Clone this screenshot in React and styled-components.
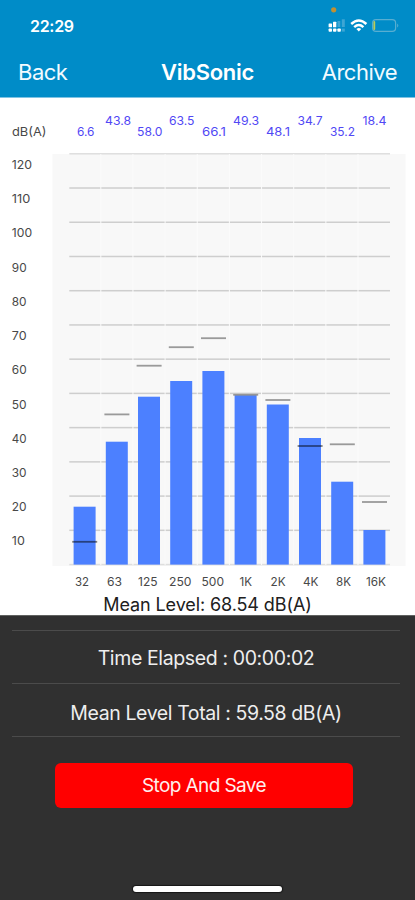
import React from "react";
import styled, { createGlobalStyle } from "styled-components";

const GlobalStyle = createGlobalStyle`
  * { box-sizing: border-box; }
  html, body { margin: 0; padding: 0; background: #303030; }
  body { font-family: Inter, "Liberation Sans", sans-serif; }
`;

const Screen = styled.div`
  display: flex;
  flex-direction: column;
  width: 415px;
  height: 900px;
  overflow: hidden;
  background: #303030;
`;

const Header = styled.header`
  flex: none;
  height: 98px;
  background: #008cc8;
  border-bottom: 1px solid #7fc3e3;
  color: #fff;
`;

const StatusBar = styled.div`
  display: flex;
  justify-content: space-between;
  height: 48px;
  padding: 0 0 0 30px;
`;

const Clock = styled.span`
  padding-top: 16px;
  font-size: 16px;
  line-height: 20px;
  font-weight: 600;
  letter-spacing: -0.3px;
`;

const StatusIcons = styled.svg`
  display: block;
  width: 95px;
  height: 45px;
`;

const NavBar = styled.nav`
  display: grid;
  grid-template-columns: 1fr auto 1fr;
  align-items: center;
  height: 48px;
  padding: 0 18px 0 18px;
`;

const NavButton = styled.button`
  justify-self: ${(p) => p.$side};
  padding: 0;
  border: 0;
  background: none;
  color: #f2fbff;
  font: 400 22px/28px Inter, sans-serif;
  letter-spacing: ${(p) => p.$tracking};
`;

const Title = styled.h1`
  margin: 0;
  font-size: 22px;
  line-height: 28px;
  font-weight: 600;
  letter-spacing: -0.3px;
`;

const ChartPanel = styled.main`
  flex: none;
  height: 518px;
  background: #fff;
  border-bottom: 1px solid #606260;
`;

const Chart = styled.svg`
  display: block;
  width: 415px;
  height: 495px;
`;

const Label = styled.text`
  font-family: Inter, sans-serif;
  font-size: ${(p) => p.$size || 12}px;
  fill: ${(p) => p.$color || "#484848"};
`;

const MeanLevel = styled.p`
  margin: 0;
  padding-top: 1px;
  font-size: 18px;
  line-height: 22px;
  text-align: center;
  color: #202020;
  letter-spacing: -0.1px;
`;

const Footer = styled.section`
  flex: 1;
  display: flex;
  flex-direction: column;
  align-items: center;
  padding: 14px 15px 8px 12px;
`;

const Reading = styled.div`
  display: flex;
  align-items: center;
  justify-content: center;
  width: 100%;
  height: 53px;
  border-top: 1px solid #4b4b4b;
  padding-top: ${(p) => p.$drop};
  color: #eee;
  font-size: 19.5px;
  line-height: 24px;
  letter-spacing: ${(p) => p.$tracking};
  white-space: pre;
`;

const Divider = styled.div`
  width: 100%;
  height: 1px;
  background: #4b4b4b;
`;

const StopButton = styled.button`
  flex: none;
  width: 298px;
  height: 45px;
  margin-top: 26px;
  margin-right: 4px;
  padding: 0;
  border: 0;
  border-radius: 6px;
  background: #ff0000;
  color: #fff0ee;
  font: 400 19px/24px Inter, sans-serif;
  letter-spacing: -0.6px;
`;

const HomeBar = styled.div`
  width: 149px;
  height: 6px;
  margin-top: auto;
  margin-left: 2px;
  border-radius: 3px;
  background: #fff;
  box-shadow: 0 0 1px 1px #171717;
`;

const TOP = 98;
const BASE = 564.6;
const STEP = 34.23;

const bands = [
  { name: "32", nx: 75, nw: 14, peak: "6.6", px: 77, pw: 17.5, top: 506.7, mark: 541.8 },
  { name: "63", nx: 107, nw: 15, peak: "43.8", px: 105, pw: 26, top: 441.7, mark: 414.4 },
  { name: "125", nx: 138, nw: 19.5, peak: "58.0", px: 137, pw: 25.5, top: 396.7, mark: 365.7 },
  { name: "250", nx: 169, nw: 22.5, peak: "63.5", px: 169, pw: 25.5, top: 381, mark: 347.2 },
  { name: "500", nx: 201.5, nw: 22.5, peak: "66.1", px: 202, pw: 24, top: 371, mark: 338.2 },
  { name: "1K", nx: 239.5, nw: 12.5, peak: "49.3", px: 233, pw: 26, top: 395.5, mark: 394.8 },
  { name: "2K", nx: 270.5, nw: 15, peak: "48.1", px: 266, pw: 24, top: 404.5, mark: 400 },
  { name: "4K", nx: 303, nw: 15.5, peak: "34.7", px: 297.5, pw: 25, top: 438, mark: 446 },
  { name: "8K", nx: 336, nw: 15, peak: "35.2", px: 330, pw: 25, top: 481.7, mark: 444.3 },
  { name: "16K", nx: 366, nw: 20, peak: "18.4", px: 362.5, pw: 24, top: 530, mark: 502 },
];

const levels = [120, 110, 100, 90, 80, 70, 60, 50, 40, 30, 20, 10];

function FitLabel({ width, children, ...rest }) {
  return (
    <Label textLength={width} lengthAdjust="spacingAndGlyphs" {...rest}>
      {children}
    </Label>
  );
}

function SpectrumChart() {
  return (
    <Chart viewBox={`0 ${TOP} 415 495`}>
      <rect x="52.5" y="154" width="353" height="412" fill="#f8f8f8" />
      {levels.concat(0).map((v) => {
        const y = BASE - (v / 10) * STEP;
        return (
          <rect key={v} x="69.3" y={y - 0.8} width="320.7" height="1.5" fill={v === 0 || v === 120 ? "#dedede" : "#cecece"} />
        );
      })}
      {bands.slice(1).map((b, i) => (
        <rect key={b.name} x={100.3 + i * 32.15} y="154" width="1" height="411" fill="#fbfbfb" />
      ))}
      {levels.map((v, i) => (
        <FitLabel key={v} x="11.8" y={168.9 + i * STEP} width={v === 110 ? 18.5 : v > 99 ? 20.3 : v === 10 ? 13 : 14.8}>
          {v}
        </FitLabel>
      ))}
      <FitLabel x="12" y="136.2" width={34.5} $size={12.3}>dB(A)</FitLabel>
      {bands.map((b, i) => {
        const x = 73.6 + i * 32.2;
        return (
          <g key={b.name}>
            <rect x={x} y={b.top} width="22" height={BASE - b.top} fill="#4c80ff" />
            <rect x={x - 1.4} y={b.mark - 0.9} width="25" height="1.8" fill="#000" opacity={b.mark > b.top ? 0.5 : 0.38} />
            <FitLabel x={b.px} y={i % 2 ? 125 : 136} width={b.pw} $color="#5148f5" $size={11.8}>
              {b.peak}
            </FitLabel>
            <FitLabel x={b.nx} y="585.7" width={b.nw} $size={11.8}>
              {b.name}
            </FitLabel>
          </g>
        );
      })}
    </Chart>
  );
}

function PhoneStatus() {
  return (
    <StatusIcons viewBox="320 0 95 45">
      <circle cx="333.7" cy="9.8" r="2.6" fill="#c09032" />
      <g fill="#fff">
        <rect x="328.6" y="23.6" width="3.4" height="3.6" rx=".5" />
        <rect x="333" y="21.8" width="3.3" height="5.4" rx=".5" />
        {[328.6, 333, 337.4].map((x) => (
          <rect key={x} x={x} y="28.5" width="3.4" height="3.2" rx=".8" />
        ))}
      </g>
      <g fill="#3ea6d4">
        <rect x="337.5" y="21" width="2.8" height="6" />
        <rect x="341.8" y="19.3" width="3" height="7.7" />
        <rect x="341.8" y="28.6" width="3" height="3" />
      </g>
      <g fill="none" stroke="#fff" strokeWidth="2.5">
        <path d="M351.2 24 Q358.8 17 366.4 24" />
        <path d="M354.2 27.1 Q358.8 23 363.4 27.1" />
      </g>
      <path d="M356.4 29 Q358.8 27 361.2 29 L358.8 31.4Z" fill="#fff" />
      <rect x="372.6" y="19.6" width="23" height="11.8" rx="3.4" fill="none" stroke="#58aed1" strokeWidth="1.2" />
      <rect x="373.4" y="21" width="1.8" height="9" rx=".9" fill="#b9cb58" />
      <path d="M397.2 23.4 Q399.4 25.5 397.2 27.6Z" fill="#58aed1" />
    </StatusIcons>
  );
}

export default function App() {
  return (
    <>
      <GlobalStyle />
      <Screen>
        <Header>
          <StatusBar>
            <Clock>22:29</Clock>
            <PhoneStatus />
          </StatusBar>
          <NavBar>
            <NavButton $side="start" $tracking="-0.5px">Back</NavButton>
            <Title>VibSonic</Title>
            <NavButton $side="end" $tracking="-0.5px">Archive</NavButton>
          </NavBar>
        </Header>
        <ChartPanel>
          <SpectrumChart />
          <MeanLevel>Mean Level: 68.54 dB(A)</MeanLevel>
        </ChartPanel>
        <Footer>
          <Reading $drop="2px" $tracking="-0.38px">Time Elapsed : 00:00:02</Reading>
          <Reading $drop="6px" $tracking="-0.4px">Mean Level Total : 59.58 dB(A)</Reading>
          <Divider />
          <StopButton>Stop And Save</StopButton>
          <HomeBar />
        </Footer>
      </Screen>
    </>
  );
}
